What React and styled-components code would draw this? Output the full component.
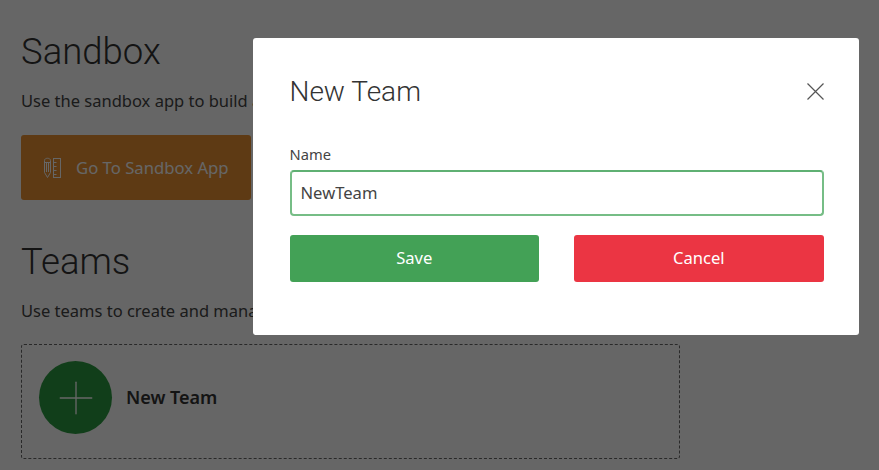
import React from "react";
import styled, { createGlobalStyle } from "styled-components";
import { FiPlus } from "react-icons/fi";

const GlobalStyle = createGlobalStyle`
  html, body {
    margin: 0;
    padding: 0;
    height: 100%;
    background: #fff;
  }
  body {
    overflow: hidden;
    font-family: "Noto Sans", "Open Sans", sans-serif;
  }
`;

function RulerPencilIcon() {
  return (
    <svg width="20" height="22" viewBox="0 0 20 22" fill="none" stroke="currentColor" strokeWidth="1">
      <path d="M1.5 3.5c0-3 6-3 6 0v12l-3 5-3-5z" />
      <path d="M1.5 5.5h6M3.5 6v9M5.5 6v9" />
      <rect x="10.5" y="1.5" width="7" height="19" />
      <path d="M10.5 5.5h3M10.5 9.5h3M10.5 13.5h3M10.5 17.5h3" />
    </svg>
  );
}

function CloseIcon() {
  return (
    <svg width="17" height="17" viewBox="0 0 17 17" fill="none" stroke="currentColor" strokeWidth="1.2">
      <path d="M0.5 0.5l16 16M16.5 0.5l-16 16" />
    </svg>
  );
}

export default function App() {
  return (
    <>
      <GlobalStyle />
      <Page>
        <Section>
          <Title>Sandbox</Title>
          <Description>Use the sandbox app to build and test your apps before you publish.</Description>
          <SandboxButton>
            <RulerPencilIcon />
            <span>Go To Sandbox App</span>
          </SandboxButton>
        </Section>
        <Section>
          <Title>Teams</Title>
          <Description>Use teams to create and manage the people working with you.</Description>
          <NewTeamCard>
            <PlusCircle>
              <FiPlus size={54} strokeWidth={0.6} />
            </PlusCircle>
            <NewTeamLabel>New Team</NewTeamLabel>
          </NewTeamCard>
        </Section>
      </Page>
      <Overlay>
        <Dialog>
          <DialogHeader>
            <DialogTitle>New Team</DialogTitle>
            <CloseButton>
              <CloseIcon />
            </CloseButton>
          </DialogHeader>
          <FieldLabel htmlFor="team-name">Name</FieldLabel>
          <NameInput id="team-name" defaultValue="NewTeam" />
          <Actions>
            <ActionButton $color="#43a156">Save</ActionButton>
            <ActionButton $color="#eb3543">Cancel</ActionButton>
          </Actions>
        </Dialog>
      </Overlay>
    </>
  );
}

const Page = styled.div`
  width: 659px;
  padding: 28px 0 0 21px;
`;
const Section = styled.section`
  margin-bottom: 38px;
  &:last-child {
    margin-bottom: 0;
  }
`;
const Title = styled.h2`
  margin: 0 0 13px;
  font-family: "Roboto", sans-serif;
  font-size: 36.5px;
  line-height: 48px;
  font-weight: 300;
  color: #333;
`;
const Description = styled.p`
  margin: 0 0 22px;
  font-size: 16.5px;
  line-height: 24px;
  color: #444;
  white-space: nowrap;
`;
const SandboxButton = styled.div`
  width: 230px;
  height: 65px;
  box-sizing: border-box;
  padding-left: 22px;
  display: flex;
  align-items: center;
  gap: 13px;
  border-radius: 3px;
  background: #ea9132;
  color: #fff;
  font-size: 16.7px;
`;
const NewTeamCard = styled.div`
  height: 115px;
  margin-top: -1px;
  box-sizing: border-box;
  padding: 16px 0 0 17px;
  display: flex;
  align-items: flex-start;
  gap: 14px;
  border: 1px dashed #666;
  border-radius: 3px;
`;
const PlusCircle = styled.div`
  width: 73px;
  height: 73px;
  border-radius: 50%;
  display: flex;
  align-items: center;
  justify-content: center;
  background: #2c9b41;
  color: #fff;
`;
const NewTeamLabel = styled.div`
  font-size: 18px;
  line-height: 73px;
  font-weight: 600;
  color: #333;
`;
const Overlay = styled.div`
  position: fixed;
  inset: 0;
  background: rgba(0, 0, 0, 0.6);
`;
const Dialog = styled.div`
  position: absolute;
  left: 253px;
  top: 38px;
  width: 606px;
  height: 297px;
  box-sizing: border-box;
  padding: 30px 35.5px 0 36.5px;
  background: #fff;
  border-radius: 3px;
`;
const DialogHeader = styled.div`
  display: flex;
  align-items: center;
  justify-content: space-between;
  height: 46px;
  margin-bottom: 30px;
`;
const DialogTitle = styled.h3`
  margin: 0;
  font-family: "Roboto", sans-serif;
  font-size: 28px;
  font-weight: 300;
  color: #333;
`;
const CloseButton = styled.div`
  display: flex;
  color: #555;
`;
const FieldLabel = styled.label`
  display: block;
  font-size: 14.7px;
  line-height: 20px;
  color: #444;
  margin-bottom: 6px;
`;
const NameInput = styled.input`
  display: block;
  width: 100%;
  height: 46px;
  box-sizing: border-box;
  padding: 0 9px 2px;
  border: 2px solid #76bd86;
  border-top-color: #5fb073;
  border-radius: 4px;
  outline: none;
  font-family: inherit;
  font-size: 16.6px;
  color: #444;
`;
const Actions = styled.div`
  display: flex;
  justify-content: space-between;
  margin-top: 19px;
`;
const ActionButton = styled.div`
  width: 249.5px;
  height: 47px;
  box-sizing: border-box;
  padding-bottom: 2px;
  display: flex;
  align-items: center;
  justify-content: center;
  border-radius: 3px;
  background: ${(props) => props.$color};
  color: #fff;
  font-size: 16.6px;
`;
